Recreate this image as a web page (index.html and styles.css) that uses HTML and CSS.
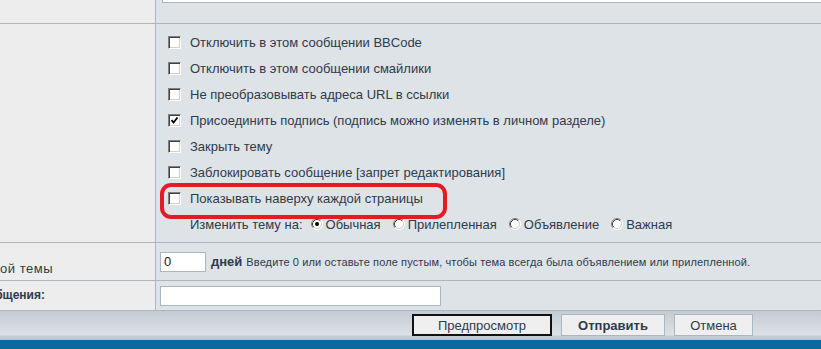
FILE: index.html
```html
<!DOCTYPE html>
<html lang="ru">
<head>
<meta charset="utf-8">
<title>Отправить сообщение</title>
<link rel="stylesheet" href="styles.css">
</head>
<body>
<svg class="defs" width="0" height="0" aria-hidden="true">
  <symbol id="radio" viewBox="0 0 12 12">
    <circle cx="6" cy="6" r="5" fill="#fff"/>
    <path d="M2.11 9.89 A5.5 5.5 0 0 1 9.89 2.11" fill="none" stroke="#808080" stroke-width="1"/>
    <path d="M9.89 2.11 A5.5 5.5 0 0 1 2.11 9.89" fill="none" stroke="#ffffff" stroke-width="1"/>
    <path d="M2.82 9.18 A4.5 4.5 0 0 1 9.18 2.82" fill="none" stroke="#404040" stroke-width="1"/>
    <path d="M9.18 2.82 A4.5 4.5 0 0 1 2.82 9.18" fill="none" stroke="#d4d0c8" stroke-width="1"/>
  </symbol>
</svg>

<div class="form">
  <div class="l"></div>
  <div class="r top"><div class="textarea-end"></div></div>

  <div class="l"></div>
  <div class="r opts">
    <div class="opt"><span class="cb"></span><span>Отключить в этом сообщении BBCode</span></div>
    <div class="opt"><span class="cb"></span><span>Отключить в этом сообщении смайлики</span></div>
    <div class="opt"><span class="cb"></span><span>Не преобразовывать адреса URL в ссылки</span></div>
    <div class="opt"><span class="cb"><svg viewBox="0 0 13 13" width="13" height="13"><path d="M3.5 6 L5.5 8.5 L9.5 3.5" fill="none" stroke="#000" stroke-width="1.8"/></svg></span><span>Присоединить подпись (подпись можно изменять в личном разделе)</span></div>
    <div class="opt"><span class="cb"></span><span>Закрыть тему</span></div>
    <div class="opt"><span class="cb"></span><span>Заблокировать сообщение [запрет редактирования]</span></div>
    <div class="opt marked"><span class="cb"></span><span>Показывать наверху каждой страницы</span></div>
    <div class="radios">
      <span class="rlabel">Изменить тему на:</span>
      <span class="ritem"><span class="rb"><svg viewBox="0 0 12 12" width="12" height="12"><use href="#radio"/><circle cx="6" cy="6" r="2" fill="#000"/></svg></span>Обычная</span>
      <span class="ritem"><span class="rb"><svg viewBox="0 0 12 12" width="12" height="12"><use href="#radio"/></svg></span>Прилепленная</span>
      <span class="ritem"><span class="rb"><svg viewBox="0 0 12 12" width="12" height="12"><use href="#radio"/></svg></span>Объявление</span>
      <span class="ritem"><span class="rb"><svg viewBox="0 0 12 12" width="12" height="12"><use href="#radio"/></svg></span>Важная</span>
    </div>
  </div>

  <div class="l clip bottom"><span>Продолжительность объявления/прилепленной темы</span></div>
  <div class="r days">
    <span class="input small-in">0</span>
    <b class="unit">дней</b>
    <span class="hint">Введите 0 или оставьте поле пустым, чтобы тема всегда была объявлением или прилепленной.</span>
  </div>

  <div class="l clip center"><b>Описание сообщения:</b></div>
  <div class="r subj"><span class="input wide-in"></span></div>
</div>

<div class="bar">
  <span class="btn default">Предпросмотр</span>
  <span class="btn main">Отправить</span>
  <span class="btn cancel">Отмена</span>
</div>
<div class="footer"></div>
</body>
</html>
```
FILE: styles.css
```css
* { box-sizing: border-box; }

html, body {
  margin: 0;
  padding: 0;
}

body {
  width: 821px;
  height: 349px;
  overflow: hidden;
  background: #dee3e7;
  font-family: "Liberation Sans", Arial, sans-serif;
  font-size: 13px;
  color: #2f3a4b;
}

.defs { position: absolute; }

.form {
  display: grid;
  grid-template-columns: 156px 1fr;
  grid-template-rows: 24px 219px 38px 30px;
}

.l {
  background: #ededed;
  border-right: 1px solid #a9b7c2;
  border-bottom: 1px solid #a9b7c2;
}

.r {
  background: #dee3e7;
  border-bottom: 1px solid #a9b7c2;
}

.top { padding-left: 6px; }

.textarea-end {
  height: 3px;
  background: #fff;
  border-left: 1px solid #a9b7c2;
  border-bottom: 1px solid #a9b7c2;
}

.opts {
  padding: 5px 0 0 12px;
  display: flex;
  flex-direction: column;
}

.opt {
  height: 26px;
  display: flex;
  align-items: center;
  gap: 9px;
  white-space: nowrap;
}

.opt.marked { position: relative; }
.opt.marked::after {
  content: "";
  position: absolute;
  left: -8px;
  top: -2px;
  width: 279px;
  height: 28px;
  border: 4px solid #e41b22;
  border-radius: 11px;
}

.cb {
  width: 13px;
  height: 13px;
  flex: none;
  background: #fff;
  border: 1px solid;
  border-color: #808080 #fff #fff #808080;
  box-shadow: inset 1px 1px 0 #404040, inset -1px -1px 0 #d4d0c8;
  position: relative;
}
.cb svg { position: absolute; left: -1px; top: -1px; }

.radios {
  height: 26px;
  display: flex;
  align-items: center;
  padding-left: 22px;
  gap: 12px;
  white-space: nowrap;
}
.rlabel { margin-right: -4px; }
.ritem { display: flex; align-items: center; gap: 3px; }
.rb { width: 12px; height: 12px; display: block; }
.rb svg { display: block; }

.clip {
  display: flex;
  justify-content: flex-end;
  white-space: nowrap;
  overflow: hidden;
}
.clip.bottom { align-items: flex-end; padding: 0 102px 4px 0; font-size: 13px; letter-spacing: 0.5px; }
.clip.center { align-items: center; padding: 0 110px 1px 0; font-size: 12px; }

.days {
  display: flex;
  align-items: center;
  padding-left: 4px;
  white-space: nowrap;
}

.input {
  display: block;
  height: 20px;
  background: #fff;
  border: 1px solid #a9b7c2;
  font-size: 13px;
  line-height: 18px;
  padding-left: 3px;
  color: #222;
}
.small-in { width: 46px; }
.wide-in { width: 281px; }

.unit { font-size: 13px; margin-left: 5px; }
.hint { font-size: 11px; margin-left: 4px; letter-spacing: 0.12px; }

.subj {
  display: flex;
  align-items: center;
  padding-left: 4px;
}

.bar {
  height: 29px;
  padding: 3px 0 0 412px;
  display: flex;
  gap: 9px;
  background: linear-gradient(#c3cbd3 0, #dce1e5 24px, #c8cdd3 25px, #bcc3ca 29px);
}

.btn {
  height: 22px;
  display: flex;
  align-items: center;
  justify-content: center;
  background: #efefef;
  border: 1px solid #a9b7c2;
  font-size: 13px;
  color: #2f3a4b;
}
.btn.default { width: 140px; border: 2px solid #111; }
.btn.main { width: 104px; font-weight: bold; }
.btn.cancel { width: 79px; }

.footer {
  height: 10px;
  background: #0d689d;
}
```
